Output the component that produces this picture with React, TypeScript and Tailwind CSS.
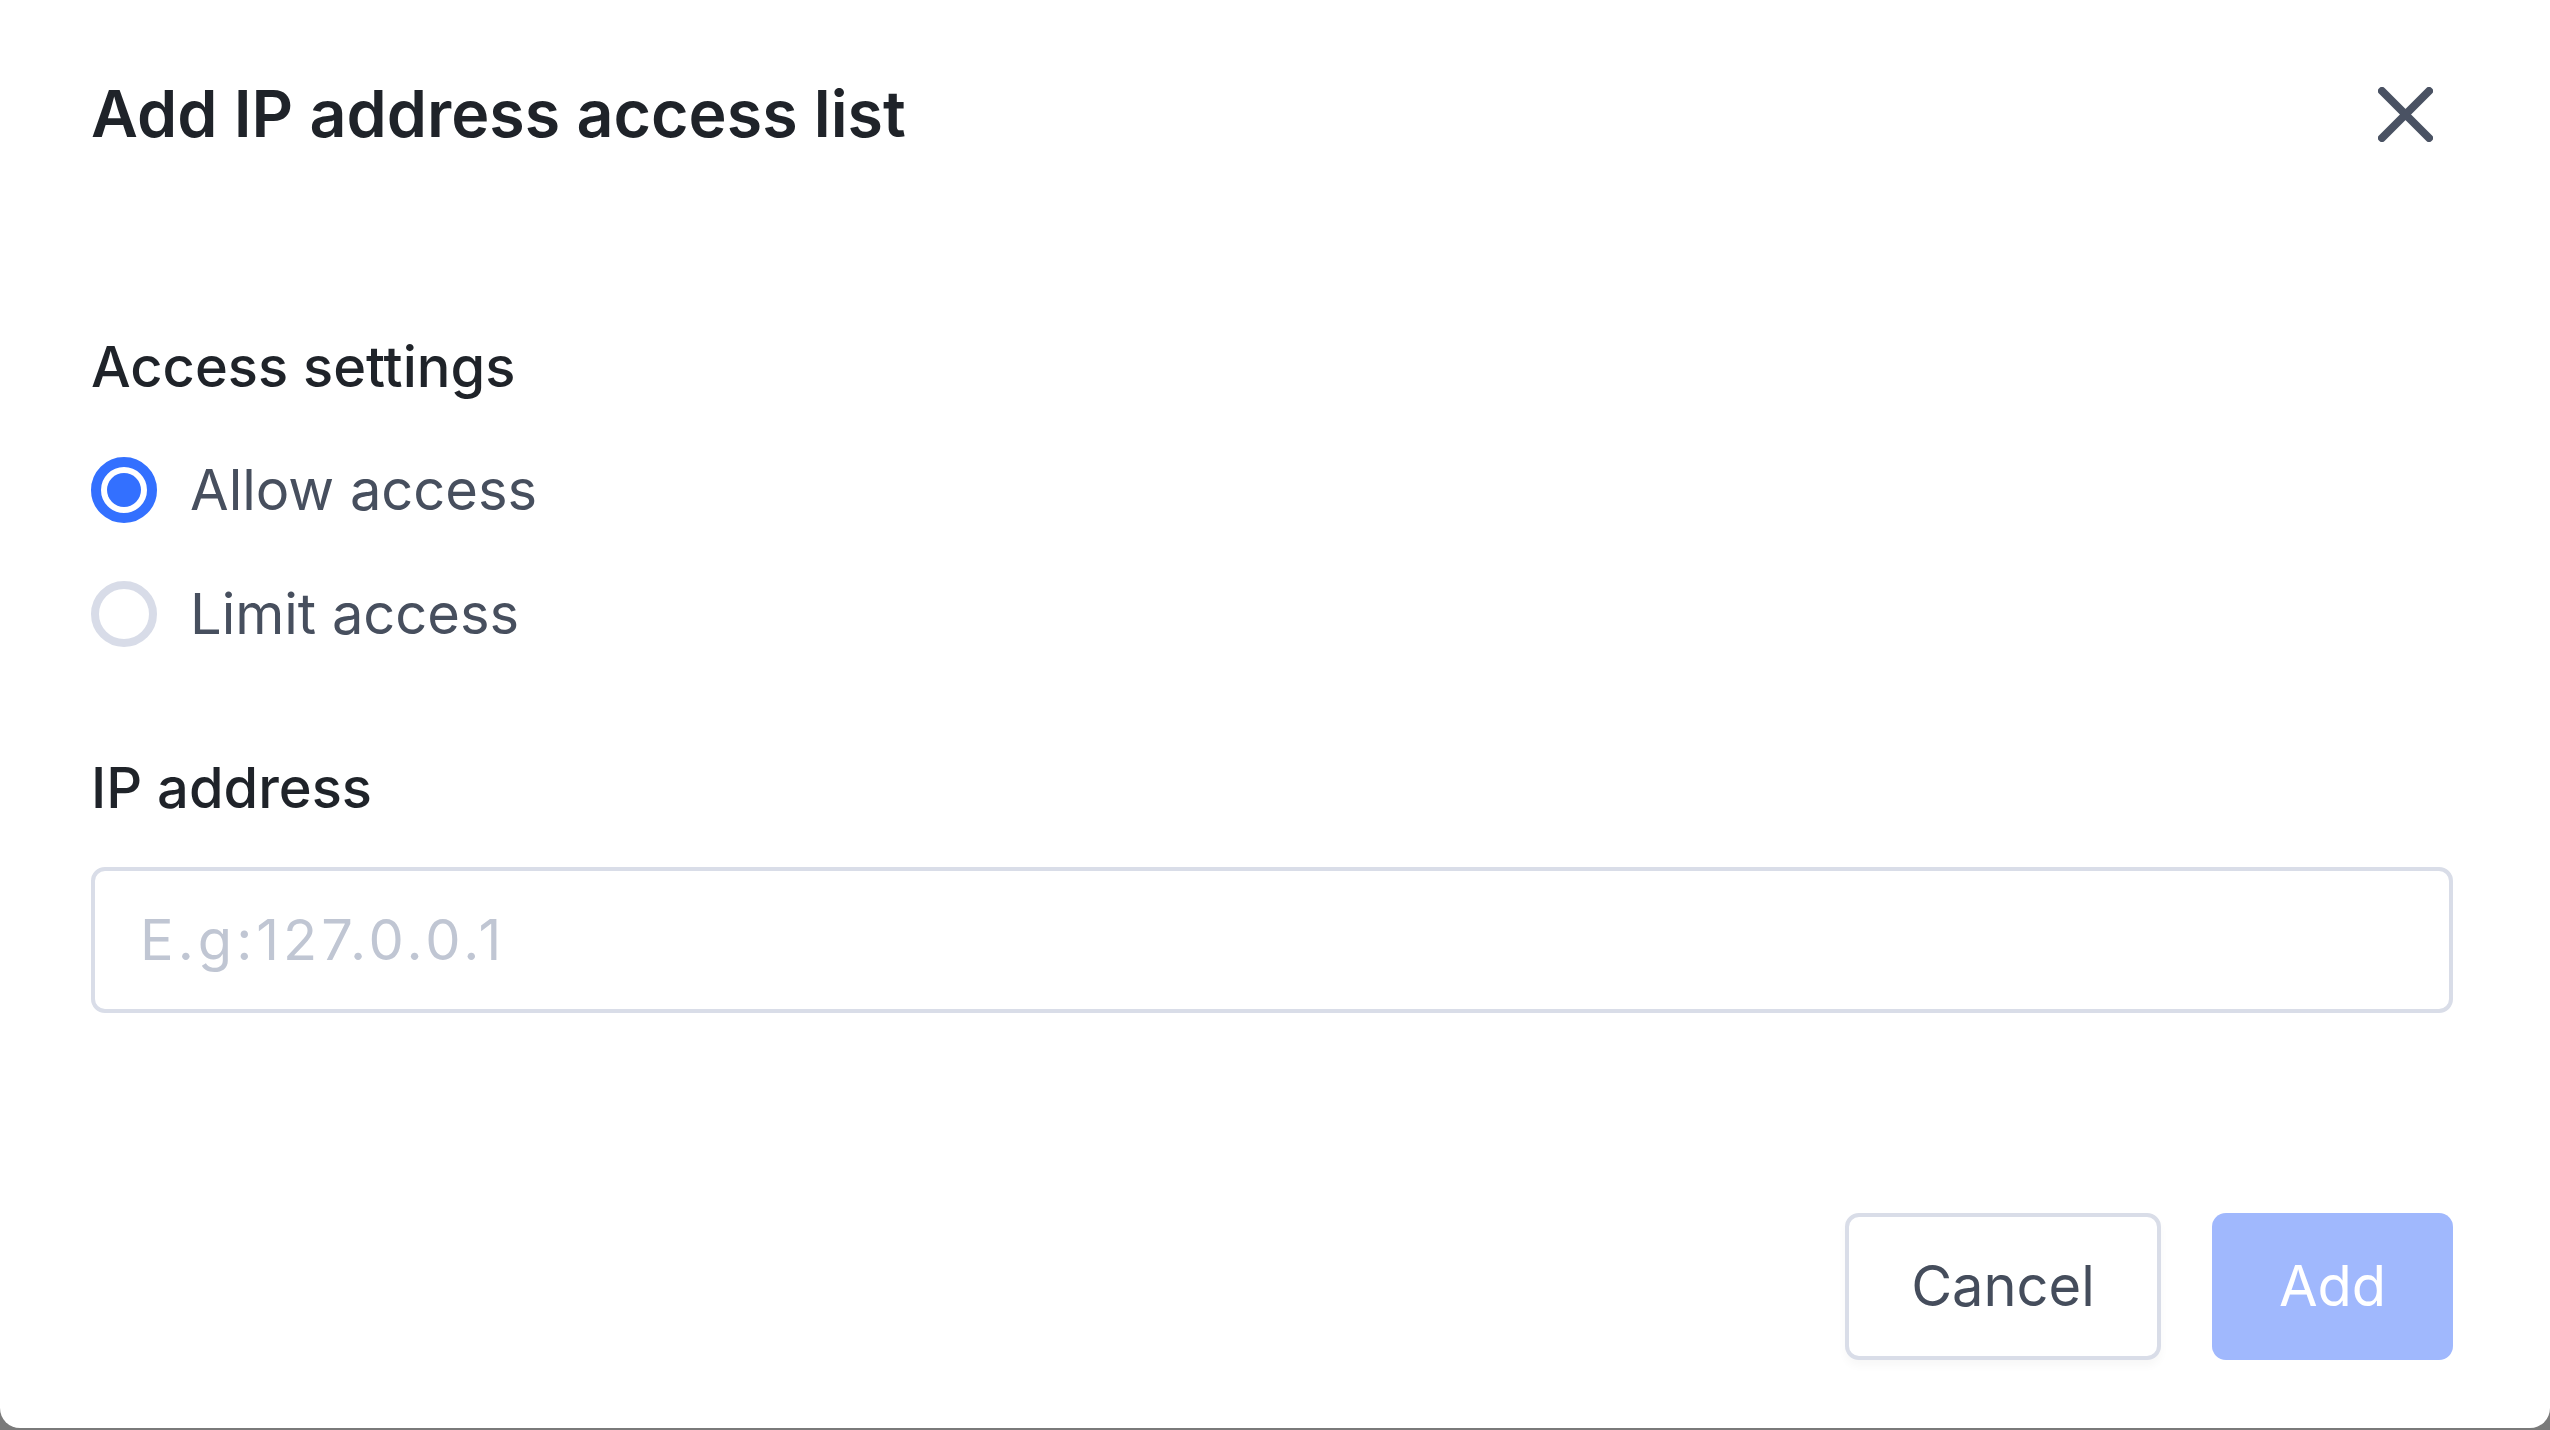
export default function App() {
  return (
    <div className="h-[1430px] w-full overflow-hidden bg-[#7a7a7a]">
      <div className="flex h-[1428px] flex-col rounded-b-[20px] bg-white pl-[91px] pr-[97px] pt-[82px] font-[Inter,sans-serif]">
        <div className="flex items-center justify-between">
          <h1 className="text-[64.5px] font-semibold leading-none text-[#1f2329]">Add IP address access list</h1>
          <button className="mr-[20px] flex h-[55px] w-[55px] items-center justify-center" aria-label="Close">
            <svg width="55" height="55" viewBox="0 0 55 55" fill="none">
              <path d="M4 4L51 51M51 4L4 51" stroke="#4a5263" strokeWidth="8" strokeLinecap="round" />
            </svg>
          </button>
        </div>

        <div className="mt-[192px] text-[56px] font-medium leading-none text-[#1f2329]">Access settings</div>

        <div className="mt-[62px] flex flex-col gap-[58px]">
          <label className="flex items-center gap-[33px]">
            <span className="flex h-[66px] w-[66px] items-center justify-center rounded-full border-[10px] border-[#3370ff]">
              <span className="h-[34px] w-[34px] rounded-full bg-[#3370ff]" />
            </span>
            <span className="text-[56px] leading-none text-[#474f5e]">Allow access</span>
          </label>
          <label className="flex items-center gap-[33px]">
            <span className="h-[66px] w-[66px] rounded-full border-[8px] border-[#d8dce8]" />
            <span className="text-[56px] leading-none text-[#474f5e]">Limit access</span>
          </label>
        </div>

        <div className="mt-[113px] text-[56px] font-medium leading-none text-[#1f2329]">IP address</div>

        <input
          type="text"
          placeholder="E.g:127.0.0.1"
          className="mt-[51px] h-[146px] w-full rounded-[14px] border-[4px] border-[#d9dde8] pl-[45px] text-[56px] tracking-[4px] text-[#1f2329] outline-none placeholder:text-[#c0c6d3]"
        />

        <div className="mt-[200px] flex justify-end gap-[51px]">
          <button className="h-[147px] w-[316px] rounded-[14px] border-[4px] border-[#d9dde8] bg-white text-[56px] text-[#454d5c] shadow-[0_6px_8px_rgba(0,0,0,0.03)]">
            Cancel
          </button>
          <button className="h-[147px] w-[241px] rounded-[14px] bg-[#a0b8fd] text-[56px] text-white">Add</button>
        </div>
      </div>
    </div>
  );
}
